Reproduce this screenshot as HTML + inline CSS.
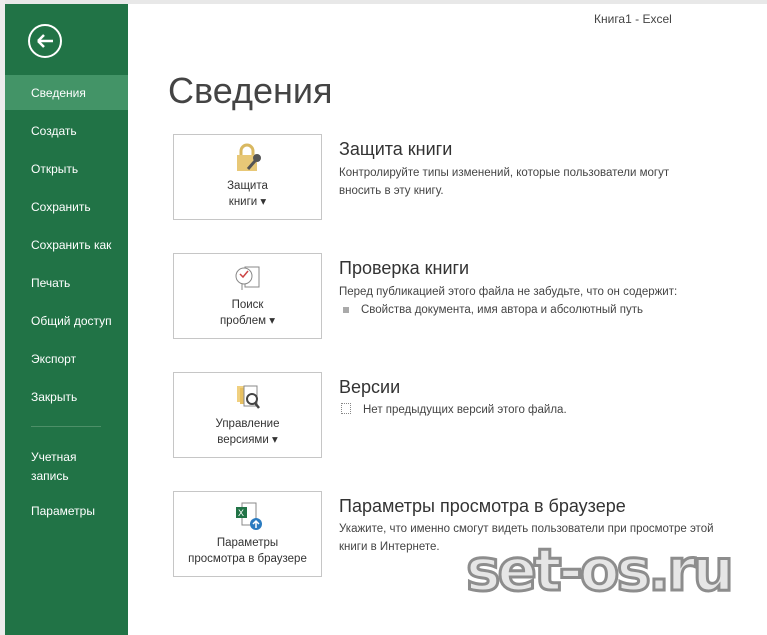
<!DOCTYPE html>
<html><head><meta charset="utf-8"><style>
*{margin:0;padding:0;box-sizing:border-box}
body{width:767px;height:635px;background:#fff;position:relative;overflow:hidden;font-family:"Liberation Sans","DejaVu Sans",sans-serif;color:#444}
.strip{position:absolute;left:0;top:0;width:767px;height:4px;background:#e8e8e8}
.lstrip{position:absolute;left:0;top:0;width:5px;height:635px;background:#ececec}
.side{position:absolute;left:5px;top:4px;width:123px;height:631px;background:#217346}
.sel{position:absolute;left:5px;top:75px;width:123px;height:35px;background:#439467}
.nav{position:absolute;left:31px;color:#fff;font-size:12px}
.back{position:absolute;left:28px;top:24px;width:34px;height:34px;border:2px solid #fff;border-radius:50%}
.sep{position:absolute;left:31px;top:426px;width:70px;height:1px;background:#4d9068}
h1{position:absolute;left:168px;top:70px;font-weight:normal;font-size:36px;color:#444}
.title{position:absolute;left:594px;top:12px;font-size:12px;color:#444}
.box{position:absolute;left:173px;width:149px;height:86px;border:1px solid #c6c6c6;text-align:center;font-size:11.5px;color:#333;line-height:16px}
.box svg{display:block;margin:7px auto 2px}
.h{position:absolute;left:339px;font-size:18px;color:#333}
.t{position:absolute;left:339px;font-size:11.5px;color:#444;line-height:18px}
.wm{position:absolute;left:466px;top:536px;font-size:58px;font-weight:bold;color:#e6e6e6;-webkit-text-stroke:3px #8d8d8d;letter-spacing:-3px;font-family:"DejaVu Sans",sans-serif}
</style></head><body>
<div class="strip"></div><div class="lstrip"></div>
<div class="side"></div><div class="sel"></div>
<div class="back"><svg width="30" height="30" viewBox="0 0 30 30" style="position:absolute;left:0;top:0"><path d="M8 15H23M8 15L14 9M8 15L14 21" stroke="#fff" stroke-width="2.5" fill="none"/></svg></div>
<div class="nav" style="top:86px">Сведения</div>
<div class="nav" style="top:124px">Создать</div>
<div class="nav" style="top:162px">Открыть</div>
<div class="nav" style="top:200px">Сохранить</div>
<div class="nav" style="top:238px">Сохранить как</div>
<div class="nav" style="top:276px">Печать</div>
<div class="nav" style="top:314px">Общий доступ</div>
<div class="nav" style="top:352px">Экспорт</div>
<div class="nav" style="top:390px">Закрыть</div>
<div class="sep"></div>
<div class="nav" style="top:448px;line-height:19px">Учетная<br>запись</div>
<div class="nav" style="top:504px">Параметры</div>
<div class="title">Книга1 - Excel</div>
<h1>Сведения</h1>

<div class="box" style="top:134px"><svg width="34" height="34" viewBox="0 0 34 34"><path d="M10 13V9a6 6 0 0 1 12 0v4" stroke="#d9b860" stroke-width="3" fill="none"/><rect x="6" y="13" width="20" height="16" fill="#e8c877"/><circle cx="26" cy="16" r="4" fill="#555"/><path d="M24 19l-7 8" stroke="#555" stroke-width="3"/></svg>Защита<br>книги ▾</div>
<div class="h" style="top:139px">Защита книги</div>
<div class="t" style="top:164px">Контролируйте типы изменений, которые пользователи могут<br>вносить в эту книгу.</div>

<div class="box" style="top:253px"><svg width="34" height="34" viewBox="0 0 34 34"><rect x="14" y="6" width="14" height="20" fill="#fff" stroke="#888"/><circle cx="13" cy="15" r="8" fill="#fff" stroke="#888"/><path d="M9 13l3 3 5-6" stroke="#c44" stroke-width="1.5" fill="none"/><path d="M11 23v6" stroke="#888"/></svg>Поиск<br>проблем ▾</div>
<div class="h" style="top:258px">Проверка книги</div>
<div class="t" style="top:283px">Перед публикацией этого файла не забудьте, что он содержит:</div>
<div class="t" style="top:301px;left:343px"><span style="display:inline-block;width:6px;height:6px;background:#aaa;margin-right:12px"></span>Свойства документа, имя автора и абсолютный путь</div>

<div class="box" style="top:372px"><svg width="34" height="34" viewBox="0 0 34 34"><rect x="6" y="6" width="10" height="16" fill="#f0d080"/><rect x="9" y="8" width="10" height="16" fill="#e8c060"/><rect x="13" y="6" width="13" height="20" fill="#fff" stroke="#888"/><circle cx="21" cy="19" r="5" fill="#fff" stroke="#444" stroke-width="2"/><path d="M24 23l4 5" stroke="#444" stroke-width="2.5"/></svg>Управление<br>версиями ▾</div>
<div class="h" style="top:377px">Версии</div>
<div class="t" style="top:401px;left:341px"><span style="display:inline-block;width:10px;height:11px;border:1px dotted #888;margin-right:12px;vertical-align:-1px"></span>Нет предыдущих версий этого файла.</div>

<div class="box" style="top:491px"><svg width="34" height="34" viewBox="0 0 34 34"><rect x="11" y="4" width="14" height="22" fill="#fff" stroke="#888"/><rect x="5" y="8" width="11" height="11" fill="#217346"/><text x="7" y="17" font-size="9" fill="#fff" font-family="Liberation Sans">X</text><circle cx="25" cy="25" r="6" fill="#2a7bc0"/><path d="M25 29v-7M22 25l3-3 3 3" stroke="#fff" stroke-width="1.5" fill="none"/></svg>Параметры<br>просмотра в браузере</div>
<div class="h" style="top:496px">Параметры просмотра в браузере</div>
<div class="t" style="top:520px">Укажите, что именно смогут видеть пользователи при просмотре этой<br>книги в Интернете.</div>
<div class="wm">set-os.ru</div>
</body></html>
